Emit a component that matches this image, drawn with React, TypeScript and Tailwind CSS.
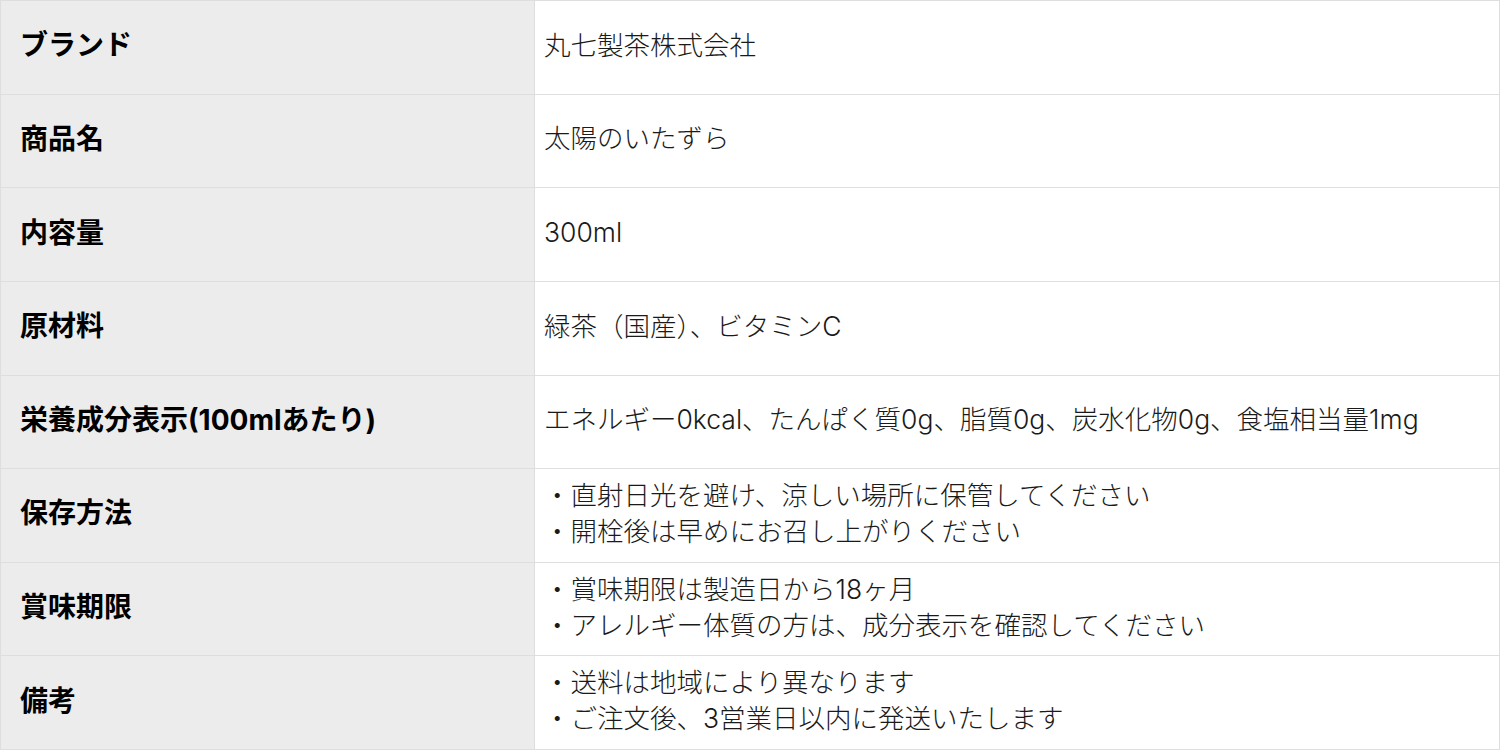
import React from "react";

const rows: { label: string; value: string[] }[] = [
  { label: "ブランド", value: ["丸七製茶株式会社"] },
  { label: "商品名", value: ["太陽のいたずら"] },
  { label: "内容量", value: ["300ml"] },
  { label: "原材料", value: ["緑茶（国産）、ビタミンC"] },
  {
    label: "栄養成分表示(100mlあたり)",
    value: ["エネルギー0kcal、たんぱく質0g、脂質0g、炭水化物0g、食塩相当量1mg"],
  },
  {
    label: "保存方法",
    value: ["・直射日光を避け、涼しい場所に保管してください", "・開栓後は早めにお召し上がりください"],
  },
  {
    label: "賞味期限",
    value: ["・賞味期限は製造日から18ヶ月", "・アレルギー体質の方は、成分表示を確認してください"],
  },
  {
    label: "備考",
    value: ["・送料は地域により異なります", "・ご注文後、3営業日以内に発送いたします"],
  },
];

export default function App() {
  return (
    <div
      className="w-[1500px] h-[750px] bg-white grid grid-cols-[534px_1fr] grid-rows-8 border-t border-l border-[#dedede]"
      style={{ fontFamily: '"Inter", "Noto Sans CJK JP", "Noto Sans", sans-serif' }}
    >
      {rows.map((r) => (
        <React.Fragment key={r.label}>
          <div className="bg-[#ececec] border-r border-b border-[#dedede] flex items-center pl-[19px] pb-[4px] text-[28px] font-bold text-black">
            {r.label}
          </div>
          <div className="bg-white border-r border-b border-[#dedede] flex flex-col justify-center pl-[9px] pb-[5px] text-[26.5px] leading-[36px] font-light text-[#1a1a1a]">
            {r.value.map((v) => (
              <div key={v}>{v}</div>
            ))}
          </div>
        </React.Fragment>
      ))}
    </div>
  );
}
